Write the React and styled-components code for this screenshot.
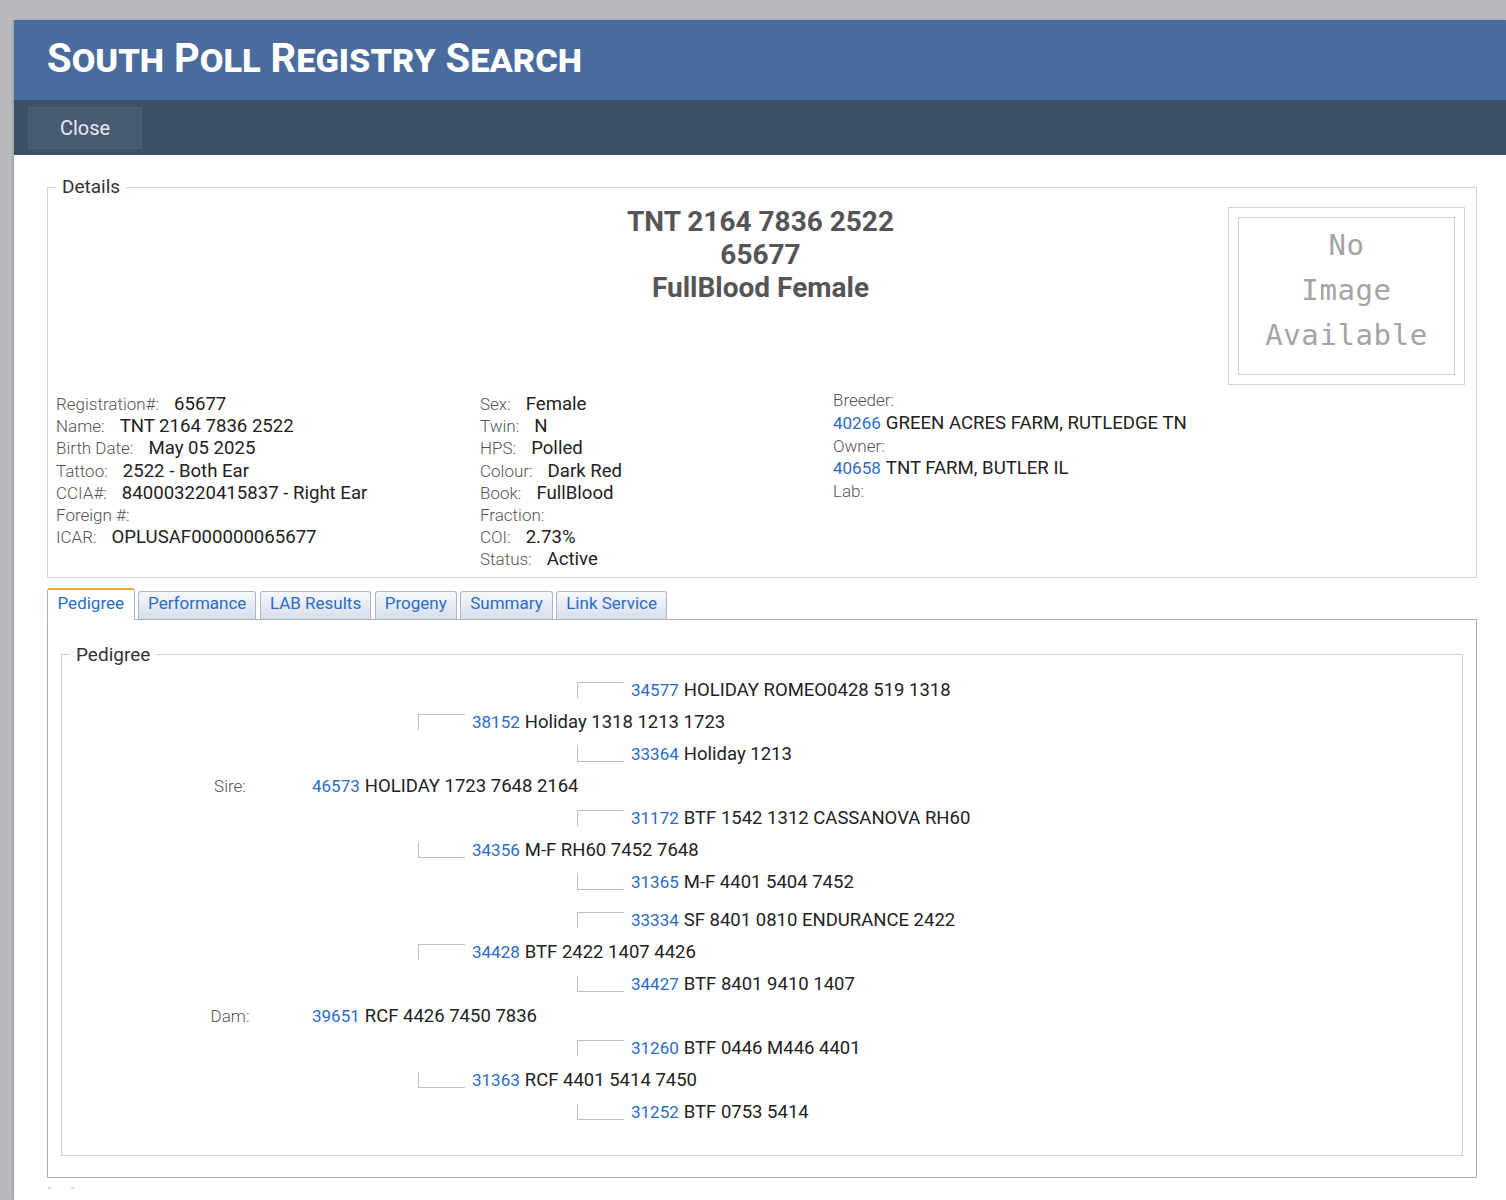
import styled, { createGlobalStyle, css } from "styled-components";

const GlobalStyle = createGlobalStyle`
  *, *::before, *::after {
    box-sizing: border-box;
  }
  html, body {
    margin: 0;
    padding: 0;
    background: #b8b9bd;
  }
  body {
    font-family: Roboto, "Liberation Sans", sans-serif;
    color: #222;
  }
`;

const Modal = styled.div`
  margin: 20px 0 0 14px;
  min-height: calc(100vh - 20px);
  background: #fff;
  box-shadow: -1px 0 2px rgba(0, 0, 0, 0.18);
`;

const Header = styled.div`
  height: 80px;
  background: #4a6b9e;
  display: flex;
  align-items: center;
  padding-left: 33px;
`;

const Title = styled.h1`
  margin: 0 0 2px;
  color: #fff;
  font: 700 40px/1 Roboto, sans-serif;
  font-variant: small-caps;
`;

const Toolbar = styled.div`
  height: 55px;
  background: #3c5068;
  display: flex;
  align-items: center;
  padding-left: 14px;
`;

const CloseButton = styled.button`
  width: 114px;
  height: 42px;
  background: #485b72;
  border: 1px solid #4f6279;
  color: #e6e9ee;
  font: 400 20px Roboto, sans-serif;
  cursor: pointer;
`;

const Body = styled.div`
  padding: 21px 29px 0 33px;
`;

const Fieldset = styled.fieldset`
  margin: 0;
  min-width: 0;
  border: 1px solid ${(p) => p.$line || "#d2d2d2"};
  padding: ${(p) => p.$pad || "0"};
`;

const Legend = styled.legend`
  margin-left: ${(p) => p.$offset}px;
  padding: 0 6px;
  font: 400 19px/22px Roboto, sans-serif;
  color: #333;
`;

const TopRow = styled.div`
  display: grid;
  grid-template-columns: 1fr auto 1fr;
  align-items: start;
`;

const Heading = styled.div`
  grid-column: 2;
  text-align: center;
  font: 700 28px/33px Roboto, sans-serif;
  color: #555;
`;

const PhotoFrame = styled.div`
  grid-column: 3;
  justify-self: end;
  margin-top: 2px;
  padding: 9px;
  border: 1px solid #d6d6d6;
`;

const NoImage = styled.div`
  width: 217px;
  height: 158px;
  padding-bottom: 12px;
  border: 1px solid #cfcfcf;
  display: flex;
  flex-direction: column;
  align-items: center;
  justify-content: center;
  font: 400 29px/45px "DejaVu Sans Mono", monospace;
  letter-spacing: 0.6px;
  color: #a4a4a4;
`;

const InfoGrid = styled.div`
  display: grid;
  grid-template-columns: 424px 353px 1fr;
  margin-top: 8px;
`;

const InfoCol = styled.div`
  display: flex;
  flex-direction: column;
  ${(p) =>
    p.$shift &&
    css`
      margin-top: -4px;
    `}
`;

const InfoLine = styled.div`
  height: ${(p) => p.$h || 22.2}px;
  display: flex;
  align-items: center;
  white-space: nowrap;
`;

const Label = styled.span`
  font: 300 17px Roboto, sans-serif;
  color: #555;
  margin-right: ${(p) => (p.$tight ? 0 : 15)}px;
`;

const Value = styled.span`
  font: 400 18.6px Roboto, sans-serif;
  color: #222;
`;

const IdLink = styled.a`
  font-size: 17px;
  color: #2b6cc4;
  text-decoration: none;
  margin-right: 5px;
`;

const TabStrip = styled.div`
  display: flex;
  align-items: flex-end;
  gap: 3.5px;
  margin-top: 10px;
  margin-bottom: -1px;
  position: relative;
  z-index: 1;
`;

const Tab = styled.div`
  padding: 0 9px 4px;
  border: 1px solid #aeb6c6;
  border-bottom: none;
  border-radius: 3px 3px 0 0;
  color: #2b6cc4;
  font: 400 17px Roboto, sans-serif;
  display: flex;
  align-items: center;
  ${(p) =>
    p.$active
      ? css`
          height: 32px;
          padding: 1px 9.5px 4px;
          border-top: 2px solid #f0a43c;
          background: #fff;
        `
      : css`
          height: 28px;
          margin-bottom: 1px;
          background: linear-gradient(#f6f8fc, #d7deeb);
        `}
`;

const Panel = styled.div`
  border: 1px solid #a9adb3;
  padding: 24px 13px 21px;
`;

const Tree = styled.div`
  display: flex;
  flex-direction: column;
  gap: 6px;
  padding: 8px 0 27px;
`;

const Half = styled.div`
  display: flex;
  flex-direction: column;
`;

const PedRow = styled.div`
  height: 32px;
  display: flex;
  align-items: center;
  padding-left: ${(p) => p.$indent}px;
  font: 400 18.5px Roboto, sans-serif;
  white-space: nowrap;
`;

const Relation = styled.span`
  width: 160px;
  text-align: center;
  font: 300 17px Roboto, sans-serif;
  color: #555;
  margin-right: 2px;
`;

const Bracket = styled.span`
  width: 47px;
  height: 16px;
  margin-right: 7px;
  border-left: 1px solid #bdbdbd;
  ${(p) =>
    p.$edge === "top"
      ? css`
          border-top: 1px solid #bdbdbd;
        `
      : css`
          border-bottom: 1px solid #bdbdbd;
        `}
`;

const Marks = styled.div`
  padding: 8px 0 0 1px;
  font: 400 9px Roboto, sans-serif;
  color: #b0b0b0;
  letter-spacing: 9px;
`;

const details1 = [
  ["Registration#:", "65677"],
  ["Name:", "TNT 2164 7836 2522"],
  ["Birth Date:", "May 05 2025"],
  ["Tattoo:", "2522 - Both Ear"],
  ["CCIA#:", "840003220415837 - Right Ear"],
  ["Foreign #:", ""],
  ["ICAR:", "OPLUSAF000000065677"],
];

const details2 = [
  ["Sex:", "Female"],
  ["Twin:", "N"],
  ["HPS:", "Polled"],
  ["Colour:", "Dark Red"],
  ["Book:", "FullBlood"],
  ["Fraction:", ""],
  ["COI:", "2.73%"],
  ["Status:", "Active"],
];

const sireSide = [
  { level: 3, edge: "top", id: "34577", name: "HOLIDAY ROMEO0428 519 1318" },
  { level: 2, edge: "top", id: "38152", name: "Holiday 1318 1213 1723" },
  { level: 3, edge: "bottom", id: "33364", name: "Holiday 1213" },
  { level: 1, label: "Sire:", id: "46573", name: "HOLIDAY 1723 7648 2164" },
  { level: 3, edge: "top", id: "31172", name: "BTF 1542 1312 CASSANOVA RH60" },
  { level: 2, edge: "bottom", id: "34356", name: "M-F RH60 7452 7648" },
  { level: 3, edge: "bottom", id: "31365", name: "M-F 4401 5404 7452" },
];

const damSide = [
  { level: 3, edge: "top", id: "33334", name: "SF 8401 0810 ENDURANCE 2422" },
  { level: 2, edge: "top", id: "34428", name: "BTF 2422 1407 4426" },
  { level: 3, edge: "bottom", id: "34427", name: "BTF 8401 9410 1407" },
  { level: 1, label: "Dam:", id: "39651", name: "RCF 4426 7450 7836" },
  { level: 3, edge: "top", id: "31260", name: "BTF 0446 M446 4401" },
  { level: 2, edge: "bottom", id: "31363", name: "RCF 4401 5414 7450" },
  { level: 3, edge: "bottom", id: "31252", name: "BTF 0753 5414" },
];

// left offset of each generation inside the pedigree box
const indents = { 1: 88, 2: 356, 3: 515 };

const tabs = ["Pedigree", "Performance", "LAB Results", "Progeny", "Summary", "Link Service"];

const Ancestor = ({ row }) => (
  <PedRow $indent={indents[row.level]}>
    {row.label ? <Relation>{row.label}</Relation> : <Bracket $edge={row.edge} />}
    <IdLink href="#">{row.id}</IdLink>
    <span>{row.name}</span>
  </PedRow>
);

const App = () => {
  return (
    <>
      <GlobalStyle />
      <Modal>
        <Header>
          <Title>South Poll Registry Search</Title>
        </Header>
        <Toolbar>
          <CloseButton>Close</CloseButton>
        </Toolbar>

        <Body>
          <Fieldset $pad="7px 11px 6px 8px">
            <Legend $offset={0}>Details</Legend>
            <TopRow>
              <Heading>
                <div>TNT 2164 7836 2522</div>
                <div>65677</div>
                <div>FullBlood Female</div>
              </Heading>
              <PhotoFrame>
                <NoImage>
                  <span>No</span>
                  <span>Image</span>
                  <span>Available</span>
                </NoImage>
              </PhotoFrame>
            </TopRow>

            <InfoGrid>
              <InfoCol>
                {details1.map(([k, v]) => (
                  <InfoLine key={k}>
                    <Label>{k}</Label>
                    <Value>{v}</Value>
                  </InfoLine>
                ))}
              </InfoCol>
              <InfoCol>
                {details2.map(([k, v]) => (
                  <InfoLine key={k}>
                    <Label>{k}</Label>
                    <Value>{v}</Value>
                  </InfoLine>
                ))}
              </InfoCol>
              <InfoCol $shift>
                <InfoLine $h={22.7}>
                  <Label $tight>Breeder:</Label>
                </InfoLine>
                <InfoLine $h={22.7}>
                  <Value>
                    <IdLink href="#">40266</IdLink>GREEN ACRES FARM, RUTLEDGE TN
                  </Value>
                </InfoLine>
                <InfoLine $h={22.7}>
                  <Label $tight>Owner:</Label>
                </InfoLine>
                <InfoLine $h={22.7}>
                  <Value>
                    <IdLink href="#">40658</IdLink>TNT FARM, BUTLER IL
                  </Value>
                </InfoLine>
                <InfoLine $h={22.7}>
                  <Label $tight>Lab:</Label>
                </InfoLine>
              </InfoCol>
            </InfoGrid>
          </Fieldset>

          <TabStrip>
            {tabs.map((t, i) => (
              <Tab key={t} $active={i === 0}>
                {t}
              </Tab>
            ))}
          </TabStrip>
          <Panel>
            <Fieldset $line="#cfcfcf">
              <Legend $offset={8}>Pedigree</Legend>
              <Tree>
                <Half>
                  {sireSide.map((r) => (
                    <Ancestor key={r.id} row={r} />
                  ))}
                </Half>
                <Half>
                  {damSide.map((r) => (
                    <Ancestor key={r.id} row={r} />
                  ))}
                </Half>
              </Tree>
            </Fieldset>
          </Panel>
          <Marks>" "</Marks>
        </Body>
      </Modal>
    </>
  );
};

export default App;
